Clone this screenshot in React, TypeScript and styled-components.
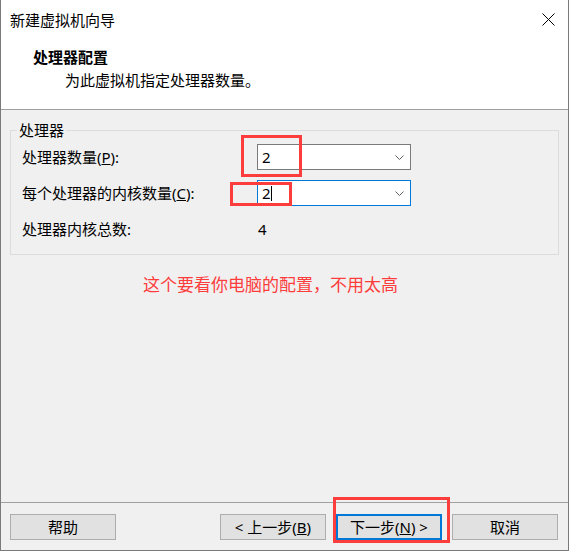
import React from "react";
import styled, { createGlobalStyle } from "styled-components";

const Global = createGlobalStyle`
  html, body { margin: 0; padding: 0; background: #ffffff; }
  #root { width: 570px; height: 551px; }
`;

const FONT = `"Noto Sans", "Noto Sans CJK SC", sans-serif`;

const Window = styled.div`
  position: relative;
  box-sizing: border-box;
  width: 569px;
  height: 551px;
  display: flex;
  flex-direction: column;
  border-left: 1px solid #7a7a7a;
  border-right: 1px solid #7a7a7a;
  border-bottom: 1px solid #7a7a7a;
  background: #f0f0f0;
  font-family: ${FONT};
  font-size: 15px;
  color: #000;
`;

const TitleBar = styled.div`
  height: 38px;
  flex: none;
  display: flex;
  align-items: center;
  justify-content: space-between;
  padding: 0 13px 0 9px;
  background: #fff;
  line-height: 20px;
`;

const Title = styled.span`
  padding-top: 2px;
`;

const Header = styled.div`
  flex: none;
  background: #fff;
  padding: 9px 0 19px 32px;
  border-bottom: 1px solid #a0a0a0;
`;

const HeaderTitle = styled.div`
  font-weight: 700;
  line-height: 20px;
`;

const HeaderSub = styled.div`
  margin: 3px 0 0 32px;
  line-height: 20px;
`;

const Content = styled.div`
  flex: 1;
  padding: 10px 9px 0 9px;
  display: flex;
  flex-direction: column;
`;

const Group = styled.fieldset`
  position: relative;
  margin: 0;
  padding: 4px 11px 12px 11px;
  border: 1px solid #dcdcdc;
  min-width: 0;
`;

const Legend = styled.legend`
  padding: 0 2px;
  margin-left: -5px;
  line-height: 20px;
`;

const Rows = styled.div`
  display: grid;
  grid-template-columns: 235px 154px;
  grid-auto-rows: 26px;
  row-gap: 10px;
  align-items: center;
`;

const Label = styled.span`
  line-height: 20px;
`;

const Value = styled.span`
  padding-left: 1px;
  line-height: 20px;
`;

const Combo = styled.div<{ $focused?: boolean }>`
  position: relative;
  box-sizing: border-box;
  height: 26px;
  display: flex;
  align-items: center;
  justify-content: space-between;
  padding: 0 6px 0 4px;
  background: #fff;
  border: 1px solid ${(p) => (p.$focused ? "#0078d7" : "#7a7a7a")};
`;

const ComboText = styled.span`
  display: flex;
  align-items: center;
  line-height: 20px;
`;

const Caret = styled.span`
  display: inline-block;
  width: 1px;
  height: 15px;
  background: #000;
`;

const Marker = styled.div<{ $l: number; $t: number; $w: number; $h: number }>`
  position: absolute;
  box-sizing: border-box;
  left: ${(p) => p.$l}px;
  top: ${(p) => p.$t}px;
  width: ${(p) => p.$w}px;
  height: ${(p) => p.$h}px;
  border: 3px solid #fd3c3c;
  pointer-events: none;
`;

const Note = styled.div`
  margin: 18px 0 0 133px;
  font-size: 17px;
  line-height: 24px;
  color: #fd3c3c;
`;

const Footer = styled.div`
  flex: none;
  display: flex;
  align-items: center;
  gap: 10px;
  padding: 11px 10px 10px 9px;
  border-top: 1px solid #a0a0a0;
`;

const Spacer = styled.div`
  flex: 1;
`;

const Button = styled.button<{ $default?: boolean }>`
  position: relative;
  box-sizing: border-box;
  width: 106px;
  height: 26px;
  padding: 0;
  margin: 0;
  background: #e1e1e1;
  border: ${(p) => (p.$default ? "2px solid #0078d7" : "1px solid #adadad")};
  font-family: ${FONT};
  font-size: 15px;
  line-height: 20px;
  color: #000;
`;

const Slot = styled.div`
  position: relative;
  display: flex;
`;

const Chevron = () => (
  <svg width="9" height="5" viewBox="0 0 9 5">
    <polyline points="0.5,0.5 4.5,4.5 8.5,0.5" fill="none" stroke="#606060" strokeWidth="1" />
  </svg>
);

const CloseIcon = () => (
  <svg width="13" height="13" viewBox="0 0 13 13">
    <line x1="0.5" y1="0.5" x2="12.5" y2="12.5" stroke="#000" strokeWidth="1" />
    <line x1="12.5" y1="0.5" x2="0.5" y2="12.5" stroke="#000" strokeWidth="1" />
  </svg>
);

export default function App() {
  return (
    <>
      <Global />
      <Window>
        <TitleBar>
          <Title>新建虚拟机向导</Title>
          <CloseIcon />
        </TitleBar>
        <Header>
          <HeaderTitle>处理器配置</HeaderTitle>
          <HeaderSub>为此虚拟机指定处理器数量。</HeaderSub>
        </Header>
        <Content>
          <Group>
            <Legend>处理器</Legend>
            <Rows>
              <Label>
                处理器数量(<u>P</u>):
              </Label>
              <Combo>
                <ComboText>2</ComboText>
                <Chevron />
                <Marker $l={-17} $t={-10} $w={61} $h={42} />
              </Combo>
              <Label>
                每个处理器的内核数量(<u>C</u>):
              </Label>
              <Combo $focused>
                <ComboText>
                  2<Caret />
                </ComboText>
                <Chevron />
                <Marker $l={-28} $t={1} $w={62} $h={24} />
              </Combo>
              <Label>处理器内核总数:</Label>
              <Value>4</Value>
            </Rows>
          </Group>
          <Note>这个要看你电脑的配置，不用太高</Note>
        </Content>
        <Footer>
          <Button>帮助</Button>
          <Spacer />
          <Button>
            &lt; 上一步(<u>B</u>)
          </Button>
          <Slot>
            <Button $default>
              下一步(<u>N</u>) &gt;
            </Button>
            <Marker $l={-3} $t={-17} $w={117} $h={46} />
          </Slot>
          <Button>取消</Button>
        </Footer>
      </Window>
    </>
  );
}
